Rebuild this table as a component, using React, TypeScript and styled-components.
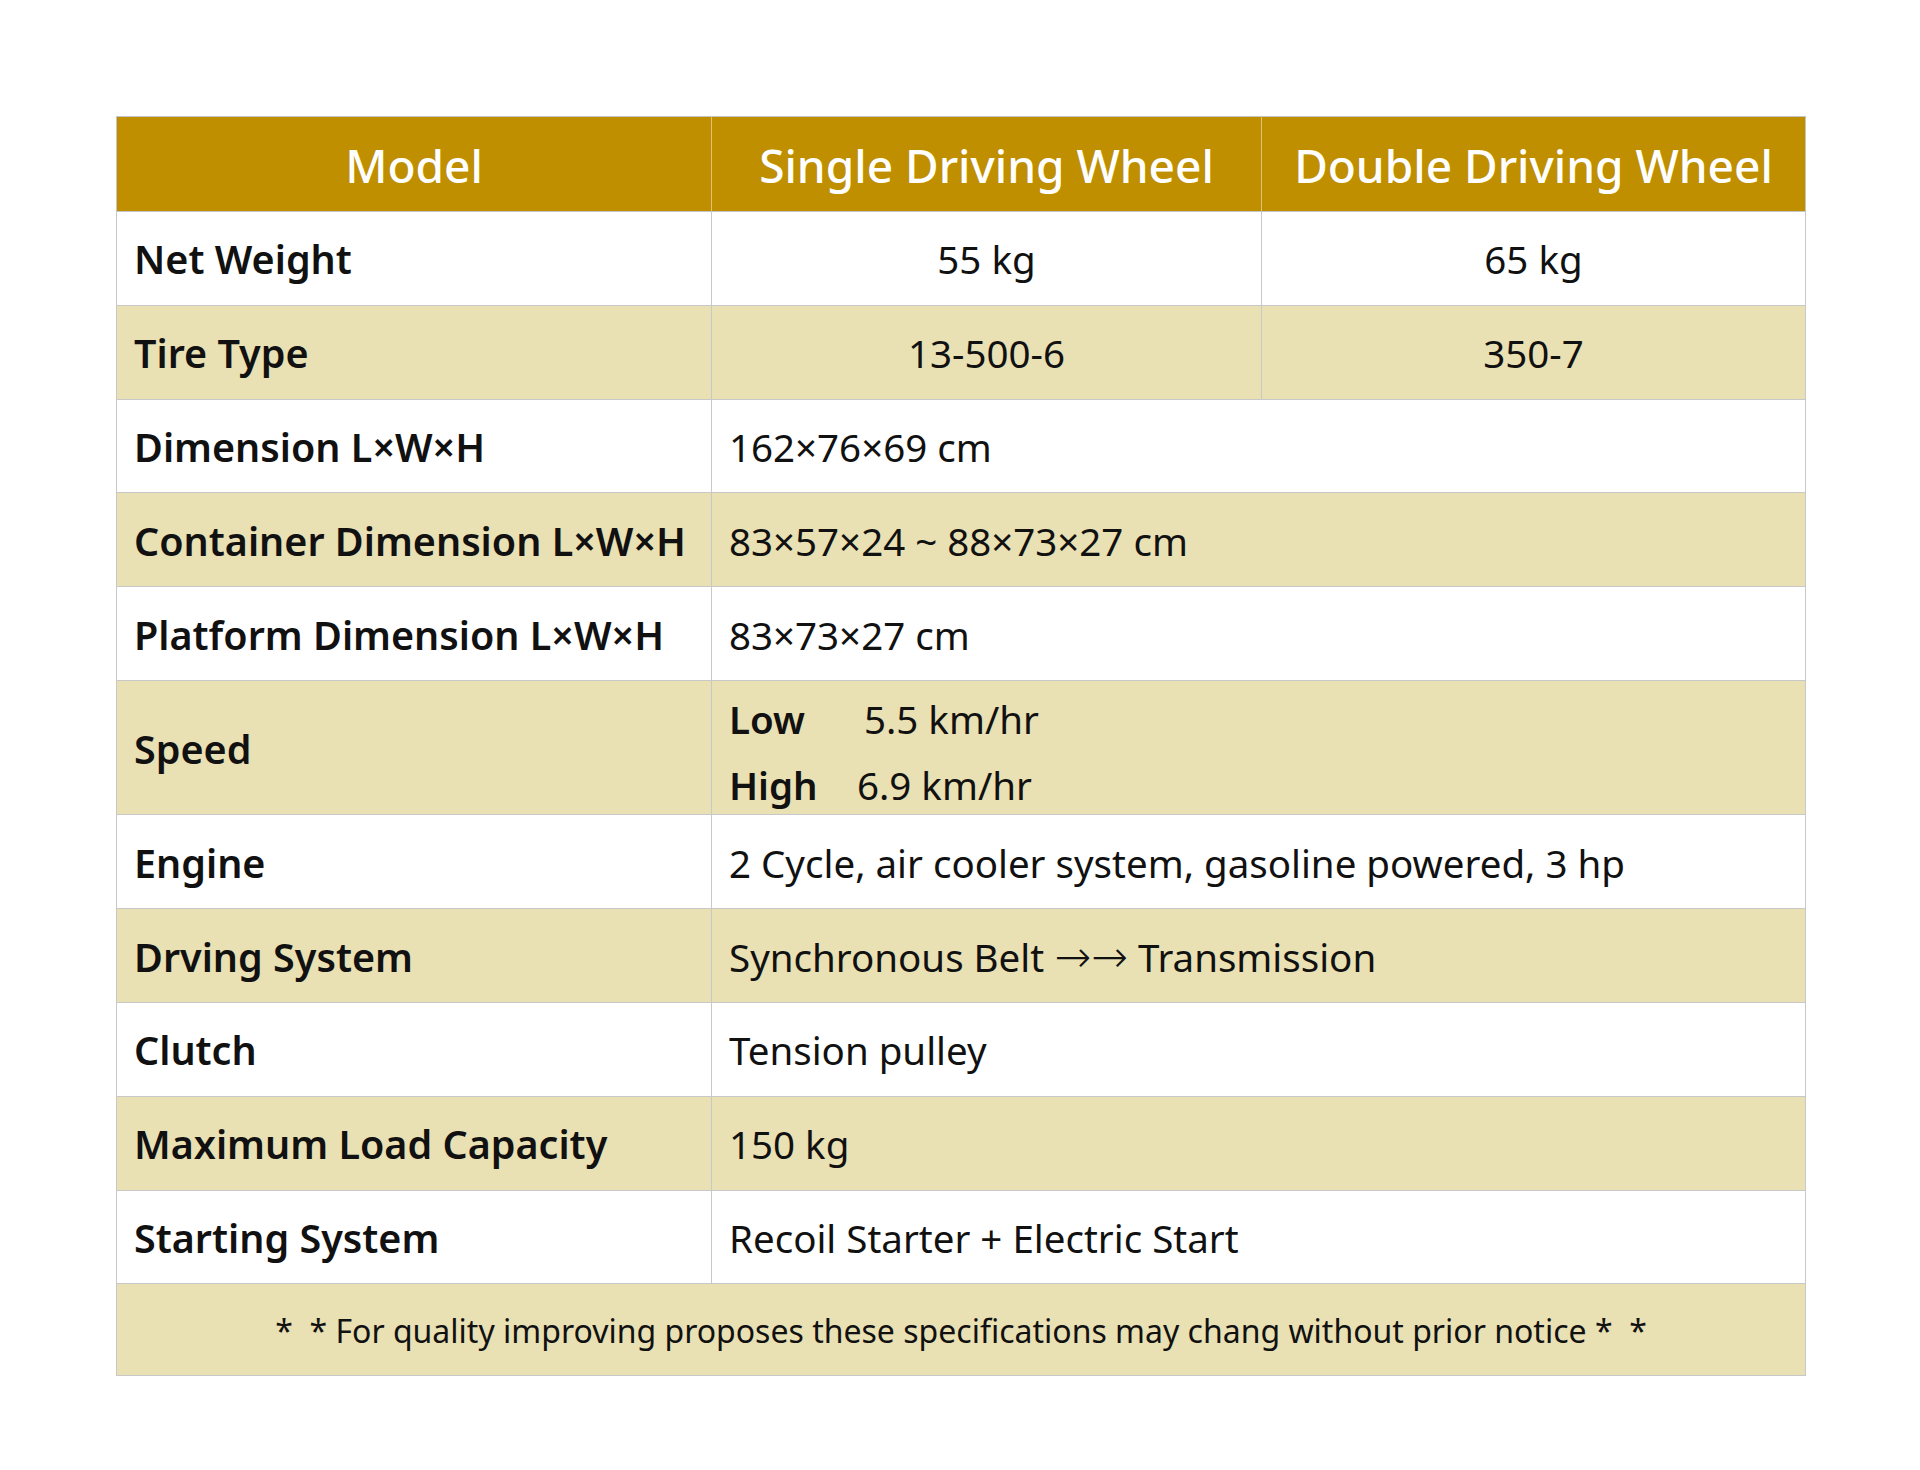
import React from "react";
import styled, { createGlobalStyle } from "styled-components";

const GlobalStyle = createGlobalStyle`
  html, body {
    margin: 0;
    padding: 0;
    background: #ffffff;
  }
  body {
    font-family: "Noto Sans", "Open Sans", sans-serif;
    color: #111111;
  }
`;

const Page = styled.div`
  width: 1920px;
  min-height: 1470px;
  padding: 116px 0 0 116px;
  box-sizing: border-box;
`;

const SpecTable = styled.table`
  width: 1686px;
  border-collapse: collapse;
  table-layout: fixed;
  border: 1px solid #c4c4c4;
`;

const HeadCell = styled.th<{ $w: number }>`
  width: ${(p) => p.$w}px;
  height: 92px;
  padding: 2px 0 0;
  background: #bf8f00;
  color: #ffffff;
  font-size: 46px;
  font-weight: 500;
  text-align: center;
  white-space: nowrap;
  border-left: 1px solid #dcc27e;
  border-bottom: 1px solid #c4c4c4;
  &:first-child {
    border-left: none;
  }
`;

const Row = styled.tr<{ $band?: boolean; $tall?: boolean }>`
  height: ${(p) => (p.$tall ? 134.5 : 93.8)}px;
  background: ${(p) => (p.$band ? "#e9e0b3" : "#ffffff")};
`;

const Label = styled.td`
  padding: 2px 0 0 17px;
  font-size: 39.5px;
  font-weight: 600;
  border: 1px solid #c8c8c8;
  white-space: nowrap;
`;

const Value = styled.td<{ $center?: boolean }>`
  padding: 2px 0 0 ${(p) => (p.$center ? 0 : 17)}px;
  font-size: 38.5px;
  font-weight: 400;
  text-align: ${(p) => (p.$center ? "center" : "left")};
  border: 1px solid #c8c8c8;
  white-space: nowrap;
`;

const Arrows = styled.span`
  font-family: "DejaVu Sans", sans-serif;
  font-size: 44px;
  font-weight: 200;
  line-height: 1;
`;

const SpeedLines = styled.div`
  display: flex;
  flex-direction: column;
  gap: 14px;
  font-size: 38.5px;
  line-height: 52px;
  padding-top: 6px;
`;

const SpeedLine = styled.div`
  display: flex;
  align-items: baseline;
`;

const SpeedName = styled.strong<{ $w: number }>`
  width: ${(p) => p.$w}px;
  font-weight: 600;
`;

const Note = styled.td`
  height: 89px;
  padding: 2px 0 0;
  text-align: center;
  font-size: 32px;
  background: #e9e0b3;
  border: 1px solid #c8c8c8;
  white-space: pre;
`;

type Spec = { label: string; value: React.ReactNode };

const wideSpecs: Spec[] = [
  { label: "Dimension L×W×H", value: "162×76×69 cm" },
  { label: "Container Dimension L×W×H", value: "83×57×24 ~ 88×73×27 cm" },
  { label: "Platform Dimension L×W×H", value: "83×73×27 cm" },
];

const lowerSpecs: Spec[] = [
  { label: "Engine", value: "2 Cycle, air cooler system, gasoline powered, 3 hp" },
  {
    label: "Drving System",
    value: (
      <>
        Synchronous Belt <Arrows>→→</Arrows> Transmission
      </>
    ),
  },
  { label: "Clutch", value: "Tension pulley" },
  { label: "Maximum Load Capacity", value: "150 kg" },
  { label: "Starting System", value: "Recoil Starter + Electric Start" },
];

export default function App() {
  return (
    <Page>
      <GlobalStyle />
      <SpecTable>
        <thead>
          <tr>
            <HeadCell $w={594}>Model</HeadCell>
            <HeadCell $w={549}>Single Driving Wheel</HeadCell>
            <HeadCell $w={543}>Double Driving Wheel</HeadCell>
          </tr>
        </thead>
        <tbody>
          <Row>
            <Label>Net Weight</Label>
            <Value $center>55 kg</Value>
            <Value $center>65 kg</Value>
          </Row>
          <Row $band>
            <Label>Tire Type</Label>
            <Value $center>13-500-6</Value>
            <Value $center>350-7</Value>
          </Row>
          {wideSpecs.map((s, i) => (
            <Row key={s.label} $band={i % 2 === 1}>
              <Label>{s.label}</Label>
              <Value colSpan={2}>{s.value}</Value>
            </Row>
          ))}
          <Row $band $tall>
            <Label>Speed</Label>
            <Value colSpan={2}>
              <SpeedLines>
                <SpeedLine>
                  <SpeedName $w={135}>Low</SpeedName>
                  <span>5.5 km/hr</span>
                </SpeedLine>
                <SpeedLine>
                  <SpeedName $w={128}>High</SpeedName>
                  <span>6.9 km/hr</span>
                </SpeedLine>
              </SpeedLines>
            </Value>
          </Row>
          {lowerSpecs.map((s, i) => (
            <Row key={s.label} $band={i % 2 === 1}>
              <Label>{s.label}</Label>
              <Value colSpan={2}>{s.value}</Value>
            </Row>
          ))}
          <tr>
            <Note colSpan={3}>
              {"*  * For quality improving proposes these specifications may chang without prior notice *  *"}
            </Note>
          </tr>
        </tbody>
      </SpecTable>
    </Page>
  );
}
